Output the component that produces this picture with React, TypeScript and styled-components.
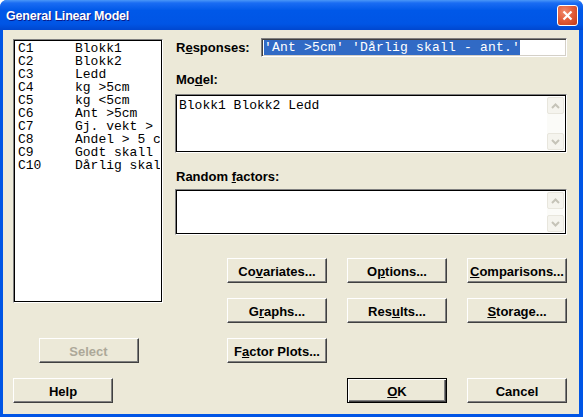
import styled, { createGlobalStyle } from 'styled-components'

const GlobalStyle = createGlobalStyle`
  html, body {
    margin: 0;
    padding: 0;
    background: #ffffff;
  }
  #root {
    width: 583px;
    height: 417px;
  }
`

const Window = styled.div`
  display: flex;
  flex-direction: column;
  width: 583px;
  height: 417px;
  box-sizing: border-box;
  background: #0055e5;
  border-radius: 7px 7px 0 0;
  overflow: hidden;
  font-family: 'Liberation Sans', Arial, sans-serif;
`

const TitleBar = styled.div`
  display: flex;
  align-items: center;
  justify-content: space-between;
  height: 30px;
  flex: 0 0 30px;
  padding: 0 5px 0 6px;
  box-sizing: border-box;
  background: linear-gradient(
    to bottom,
    #4a97f7 0%,
    #1a6cf3 10%,
    #0058e8 35%,
    #0055e5 80%,
    #0047cf 100%
  );
`

const Title = styled.span`
  color: #ffffff;
  font-size: 12.5px;
  font-weight: bold;
  letter-spacing: -0.2px;
  text-shadow: 1px 1px 0 #0a1a8a;
  margin-top: 1px;
`

const CloseButton = styled.div`
  display: flex;
  align-items: center;
  justify-content: center;
  width: 21px;
  height: 21px;
  box-sizing: border-box;
  border: 1px solid #ffffff;
  border-radius: 3px;
  background: radial-gradient(circle at 35% 30%, #f08a6c 0%, #e35f3c 45%, #c43a17 100%);
`

const Body = styled.div`
  flex: 1;
  display: flex;
  flex-direction: column;
  margin: 0 4px 3px 3px;
  padding: 8px 12px 0 10px;
  background: #ece9d8;
`

const Main = styled.div`
  display: flex;
  gap: 12px;
`

const LeftPane = styled.div`
  display: flex;
  flex-direction: column;
  width: 150px;
  flex: 0 0 150px;
`

const RightPane = styled.div`
  flex: 1;
  display: flex;
  flex-direction: column;
`

const ListBox = styled.div`
  margin-top: 1px;
  height: 264px;
  box-sizing: border-box;
  background: #ffffff;
  border: 1px solid;
  border-color: #808080 #ffffff #ffffff #808080;
  box-shadow: inset 0 0 0 1px #000000;
  padding: 2px 2px 0 4px;
  overflow: hidden;
`

const ListRow = styled.div`
  display: grid;
  grid-template-columns: 57px 1fr;
  height: 13px;
  font-family: 'Liberation Mono', 'Courier New', monospace;
  font-size: 13px;
  line-height: 13px;
  color: #000000;
  white-space: nowrap;
  overflow: hidden;
`

const Cell = styled.span`
  overflow: hidden;
`

const FieldRow = styled.div`
  display: grid;
  grid-template-columns: 86px 1fr;
  align-items: center;
  height: 19px;
`

const Label = styled.label<{ $gap?: number }>`
  display: block;
  font-size: 13px;
  font-weight: bold;
  line-height: 15px;
  color: #000000;
  padding-left: 1px;
  margin-top: ${(p) => p.$gap ?? 0}px;
`

const U = styled.span`
  text-decoration: underline;
  text-underline-offset: 1px;
`

const TextInput = styled.div`
  height: 19px;
  box-sizing: border-box;
  background: #ffffff;
  border: 1px solid;
  border-color: #808080 #ffffff #ffffff #808080;
  box-shadow: inset 1px 1px 0 #404040, inset -1px -1px 0 #d4d0c8;
  padding: 1px 2px 0 2px;
  font-family: 'Liberation Mono', 'Courier New', monospace;
  font-size: 13px;
  line-height: 15px;
  letter-spacing: 0.2px;
  white-space: nowrap;
  overflow: hidden;
`

const Selected = styled.span`
  background: #316ac5;
  color: #ffffff;
`

const TextArea = styled.div<{ $height: number; $gap: number }>`
  display: flex;
  height: ${(p) => p.$height}px;
  margin-top: ${(p) => p.$gap}px;
  box-sizing: border-box;
  background: #ffffff;
  border: 1px solid;
  border-color: #808080 #ffffff #ffffff #808080;
  box-shadow: inset 0 0 0 1px #000000;
  padding: 2px;
`

const AreaText = styled.div`
  flex: 1;
  padding: 1px 0 0 1px;
  font-family: 'Liberation Mono', 'Courier New', monospace;
  font-size: 13px;
  line-height: 15px;
  color: #000000;
`

const ScrollBar = styled.div`
  display: flex;
  flex-direction: column;
  justify-content: space-between;
  width: 17px;
  background: #fbfbf8;
`

const ScrollArrow = styled.div`
  display: flex;
  align-items: center;
  justify-content: center;
  width: 17px;
  height: 17px;
  box-sizing: border-box;
  border: 1px solid #e8e6dd;
  border-radius: 2px;
  background: #f5f4ee;
`

const ButtonGrid = styled.div`
  display: grid;
  grid-template-columns: repeat(3, 100px);
  grid-auto-rows: 25px;
  column-gap: 20px;
  row-gap: 15px;
  justify-content: end;
  margin-top: 23px;
`

const Button = styled.div<{ $default?: boolean; $disabled?: boolean }>`
  display: flex;
  align-items: center;
  justify-content: center;
  width: 100px;
  height: 25px;
  box-sizing: border-box;
  background: #ece9d8;
  font-size: 13px;
  font-weight: bold;
  color: ${(p) => (p.$disabled ? '#aca899' : '#000000')};
  border: 1px solid;
  border-color: ${(p) =>
    p.$default ? '#000000' : '#ffffff #404040 #404040 #ffffff'};
  box-shadow: ${(p) =>
    p.$default
      ? 'inset 1px 1px 0 #ffffff, inset -1px -1px 0 #404040, inset -2px -2px 0 #808080'
      : 'inset -1px -1px 0 #808080'};
  padding-top: 1px;
`

const SelectButton = styled(Button)`
  align-self: center;
  margin-top: 35px;
  margin-left: 1px;
`

const Footer = styled.div`
  display: flex;
  gap: 20px;
  margin-top: 15px;
`

const Spacer = styled.div`
  flex: 1;
`

const columns: [string, string][] = [
  ['C1', 'Blokk1'],
  ['C2', 'Blokk2'],
  ['C3', 'Ledd'],
  ['C4', 'kg >5cm'],
  ['C5', 'kg <5cm'],
  ['C6', 'Ant >5cm'],
  ['C7', 'Gj. vekt > 5cm'],
  ['C8', 'Andel > 5 cm'],
  ['C9', 'Godt skall'],
  ['C10', 'Dårlig skall - ant.'],
]

const Chevron = ({ up }: { up?: boolean }) => (
  <svg width="9" height="6" viewBox="0 0 9 6">
    <path
      d={up ? 'M1 5 L4.5 1.5 L8 5' : 'M1 1 L4.5 4.5 L8 1'}
      fill="none"
      stroke="#c5c3b8"
      strokeWidth="2"
    />
  </svg>
)

const Scroll = () => (
  <ScrollBar>
    <ScrollArrow>
      <Chevron up />
    </ScrollArrow>
    <ScrollArrow>
      <Chevron />
    </ScrollArrow>
  </ScrollBar>
)

const App = () => {
  return (
    <>
      <GlobalStyle />
      <Window>
        <TitleBar>
          <Title>General Linear Model</Title>
          <CloseButton>
            <svg width="11" height="11" viewBox="0 0 11 11">
              <path d="M1.5 1.5 L9.5 9.5 M9.5 1.5 L1.5 9.5" stroke="#ffffff" strokeWidth="2.2" />
            </svg>
          </CloseButton>
        </TitleBar>

        <Body>
          <Main>
            <LeftPane>
              <ListBox>
                {columns.map(([id, name]) => (
                  <ListRow key={id}>
                    <Cell>{id}</Cell>
                    <Cell>{name}</Cell>
                  </ListRow>
                ))}
              </ListBox>
              <SelectButton $disabled>Select</SelectButton>
            </LeftPane>

            <RightPane>
              <FieldRow>
                <Label>
                  R<U>e</U>sponses:
                </Label>
                <TextInput>
                  <Selected>'Ant &gt;5cm' 'Dårlig skall - ant.'</Selected>
                </TextInput>
              </FieldRow>

              <Label $gap={15}>
                Mo<U>d</U>el:
              </Label>
              <TextArea $height={59} $gap={7}>
                <AreaText>Blokk1 Blokk2 Ledd</AreaText>
                <Scroll />
              </TextArea>

              <Label $gap={16}>
                Random <U>f</U>actors:
              </Label>
              <TextArea $height={46} $gap={5}>
                <AreaText />
                <Scroll />
              </TextArea>

              <ButtonGrid>
                <Button>
                  Co<U>v</U>ariates...
                </Button>
                <Button>
                  O<U>p</U>tions...
                </Button>
                <Button>
                  <U>C</U>omparisons...
                </Button>
                <Button>
                  G<U>r</U>aphs...
                </Button>
                <Button>
                  Res<U>u</U>lts...
                </Button>
                <Button>
                  <U>S</U>torage...
                </Button>
                <Button>
                  F<U>a</U>ctor Plots...
                </Button>
              </ButtonGrid>
            </RightPane>
          </Main>

          <Footer>
            <Button>Help</Button>
            <Spacer />
            <Button $default>
              <U>O</U>K
            </Button>
            <Button>Cancel</Button>
          </Footer>
        </Body>
      </Window>
    </>
  )
}

export default App
